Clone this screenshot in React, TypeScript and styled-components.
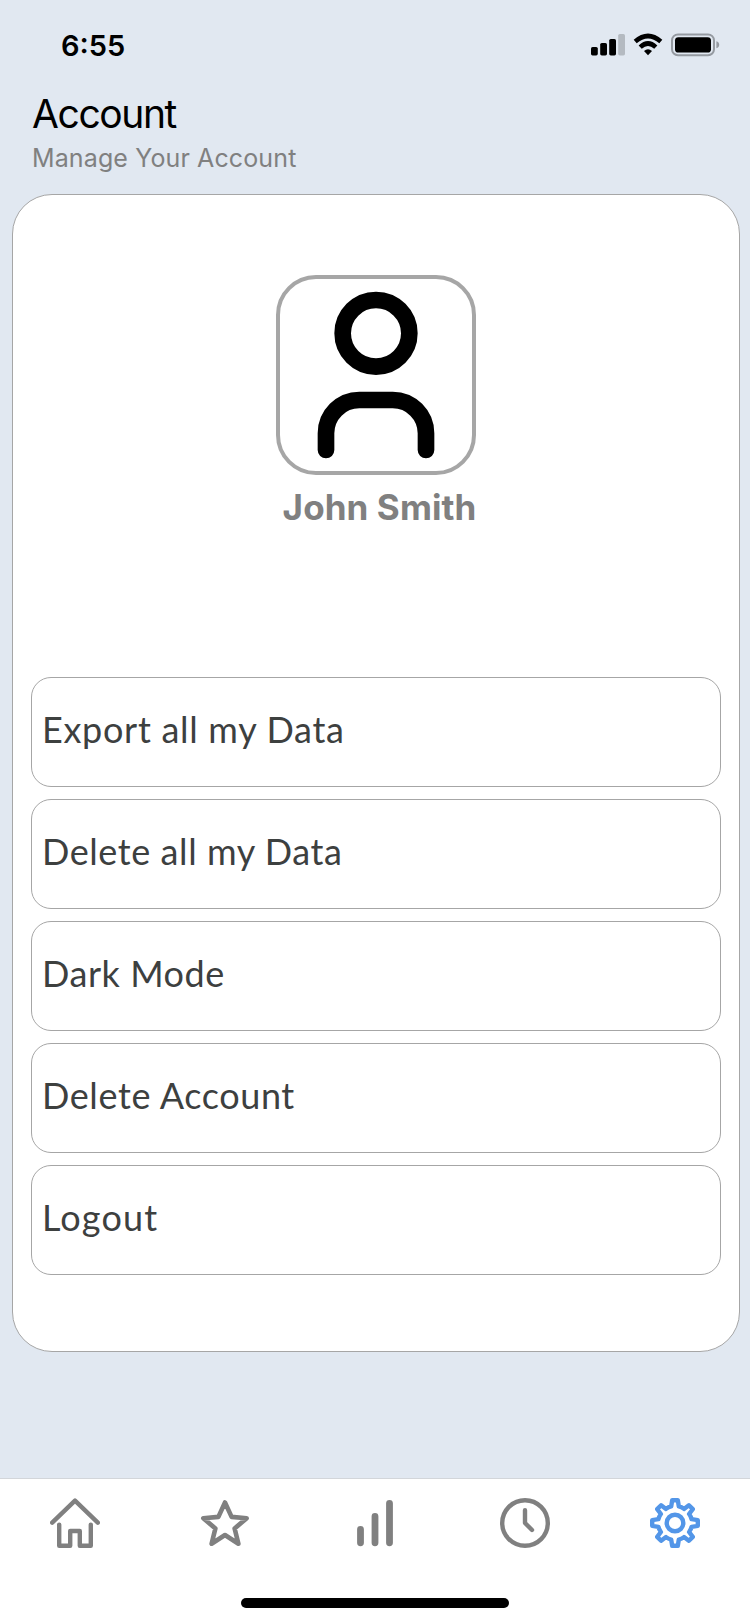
import React from 'react';
import styled, { createGlobalStyle } from 'styled-components';

const GlobalStyle = createGlobalStyle`
  * { box-sizing: border-box; }
  body { margin: 0; background: #e1e8f1; }
`;

const Screen = styled.div`
  display: flex;
  flex-direction: column;
  width: 750px;
  height: 1624px;
  background: #e1e8f1;
  font-family: Inter, "Liberation Sans", sans-serif;
`;

const StatusBar = styled.header`
  display: flex;
  justify-content: space-between;
  align-items: center;
  height: 90px;
  padding: 0 30px 0 61px;
`;

const Clock = styled.span`
  padding-top: 1px;
  font-size: 29px;
  font-weight: 600;
  line-height: 36px;
  letter-spacing: 0;
`;

const StatusIcons = styled.svg`
  display: block;
  width: 130px;
  height: 24px;
`;

const Heading = styled.div`
  height: 104px;
  padding-left: 32px;
`;

const Title = styled.h1`
  margin: 0;
  font-size: 39px;
  font-weight: 400;
  line-height: 47px;
  letter-spacing: -1.4px;
  color: #000;
`;

const Subtitle = styled.p`
  margin: 5px 0 0;
  font-size: 25px;
  line-height: 32px;
  letter-spacing: 0.12px;
  color: #808080;
`;

const Card = styled.main`
  display: flex;
  flex-direction: column;
  align-items: center;
  width: 728px;
  height: 1158px;
  margin-left: 12px;
  padding-top: 80px;
  border: 1px solid #a6a6a6;
  border-radius: 40px;
  background: #fff;
`;

const Avatar = styled.div`
  display: flex;
  align-items: center;
  justify-content: center;
  flex: none;
  width: 200px;
  height: 200px;
  border: 4px solid #a6a6a6;
  border-radius: 40px;
`;

const AvatarIcon = styled.svg`
  flex: none;
  width: 200px;
  height: 200px;
`;

const UserName = styled.h2`
  margin: 9px 0 0 7px;
  font-size: 35px;
  font-weight: 700;
  line-height: 46px;
  letter-spacing: 0.1px;
  white-space: nowrap;
  color: #808080;
`;

const Options = styled.nav`
  display: flex;
  flex-direction: column;
  gap: 12px;
  margin-top: 147px;
`;

const Option = styled.button<{ $tracking: number }>`
  width: 690px;
  height: 110px;
  padding: 0 0 6px 10px;
  border: 1px solid #a6a6a6;
  border-radius: 20px;
  background: #fff;
  color: #3d403f;
  font-family: Lato, "Liberation Sans", sans-serif;
  font-size: 36px;
  line-height: 46px;
  letter-spacing: ${({ $tracking }) => $tracking}px;
  text-align: left;
`;

const BottomBar = styled.footer`
  display: flex;
  flex-direction: column;
  align-items: center;
  height: 146px;
  margin-top: auto;
  border-top: 1px solid #d3d6da;
  background: #fff;
`;

const Tabs = styled.div`
  display: grid;
  grid-template-columns: repeat(5, 150px);
  justify-items: center;
  padding-top: 19px;
`;

const TabIcon = styled.svg<{ $active?: boolean; $weight?: number }>`
  width: 50px;
  height: 50px;
  fill: none;
  stroke: ${({ $active }) => ($active ? '#5396e8' : '#808080')};
  stroke-width: ${({ $weight = 4.4 }) => $weight}px;
  stroke-linecap: round;
  stroke-linejoin: round;
`;

const HomeIndicator = styled.div`
  width: 268px;
  height: 10px;
  margin-top: 50px;
  border-radius: 5px;
  background: #000;
`;

const options = [
  { label: 'Export all my Data', tracking: 0.7 },
  { label: 'Delete all my Data', tracking: 0.58 },
  { label: 'Dark Mode', tracking: 0.55 },
  { label: 'Delete Account', tracking: 0.62 },
  { label: 'Logout', tracking: 1.15 },
];

const GEAR =
  'M22.2 2.2H27.8L28.8 8.4Q31.6 9 34 10.9L38.9 7.2L42.8 11.1L39.1 16Q41 18.4 41.6 21.2L47.8 22.2V27.8L41.6 28.8Q41 31.6 39.1 34L42.8 38.9L38.9 42.8L34 39.1Q31.6 41 28.8 41.6L27.8 47.8H22.2L21.2 41.6Q18.4 41 16 39.1L11.1 42.8L7.2 38.9L10.9 34Q9 31.6 8.4 28.8L2.2 27.8V22.2L8.4 21.2Q9 18.4 10.9 16L7.2 11.1L11.1 7.2L16 10.9Q18.4 9 21.2 8.4Z';

export default function App() {
  return (
    <Screen>
      <GlobalStyle />
      <StatusBar>
        <Clock>6:55</Clock>
        <StatusIcons viewBox="0 0 130 24">
          <rect x="1" y="14" width="6.8" height="8.4" rx="1.6" />
          <rect x="10.2" y="10" width="6.8" height="12.4" rx="1.6" />
          <rect x="19.2" y="6" width="6.8" height="16.4" rx="1.6" />
          <rect x="28.2" y="1" width="6.8" height="21.4" rx="1.6" fill="#b4bac1" />
          <g fill="none" stroke="#000" strokeWidth="4.6">
            <path d="M45.2 8.5Q58 -2.5 70.8 8.5" />
            <path d="M50.2 14.1Q58 6.9 65.8 14.1" />
          </g>
          <path d="M54 18Q58 14.6 62 18L58 22.2Z" />
          <rect x="82" y="1.4" width="42" height="20.8" rx="6" fill="none" stroke="#959aa1" strokeWidth="2" />
          <rect x="85" y="4.2" width="36" height="15.4" rx="3.4" />
          <path d="M126.4 8.3Q129.2 9 129.2 11.8Q129.2 14.6 126.4 15.3Z" fill="#959aa1" />
        </StatusIcons>
      </StatusBar>
      <Heading>
        <Title>Account</Title>
        <Subtitle>Manage Your Account</Subtitle>
      </Heading>
      <Card>
        <Avatar>
          <AvatarIcon viewBox="0 0 24 24" fill="none" stroke="#000" strokeWidth="2" strokeLinecap="round">
            <circle cx="12" cy="7" r="4" />
            <path d="M6 21V19A4 4 0 0 1 10 15H14A4 4 0 0 1 18 19V21" />
          </AvatarIcon>
        </Avatar>
        <UserName>John Smith</UserName>
        <Options>
          {options.map(({ label, tracking }) => (
            <Option key={label} $tracking={tracking}>
              {label}
            </Option>
          ))}
        </Options>
      </Card>
      <BottomBar>
        <Tabs>
          <TabIcon viewBox="0 0 50 50">
            <path d="M2.2 24.6L25 2.6L47.8 24.6" />
            <path d="M9.2 26.6V47.8H20.2V33H29.8V47.8H40.8V26.6" />
          </TabIcon>
          <TabIcon viewBox="0 0 50 50" $weight={4.6}>
            <path d="M25 4.5L31.6 18.9L46.7 20.3L34.6 30.4L38.4 45.7L25 37L11.6 45.7L15.4 30.4L3.3 20.3L18.4 18.9Z" />
          </TabIcon>
          <TabIcon viewBox="0 0 50 50" $weight={6.8}>
            <path d="M10.5 31.4V44.8M25 18.4V44.8M39.5 5.3V44.8" />
          </TabIcon>
          <TabIcon viewBox="0 0 50 50">
            <circle cx="25" cy="25" r="22.8" />
            <path d="M25 12.2V25L32 32" />
          </TabIcon>
          <TabIcon viewBox="0 0 50 50" $active>
            <path d={GEAR} />
            <circle cx="25" cy="25" r="8.3" />
          </TabIcon>
        </Tabs>
        <HomeIndicator />
      </BottomBar>
    </Screen>
  );
}
